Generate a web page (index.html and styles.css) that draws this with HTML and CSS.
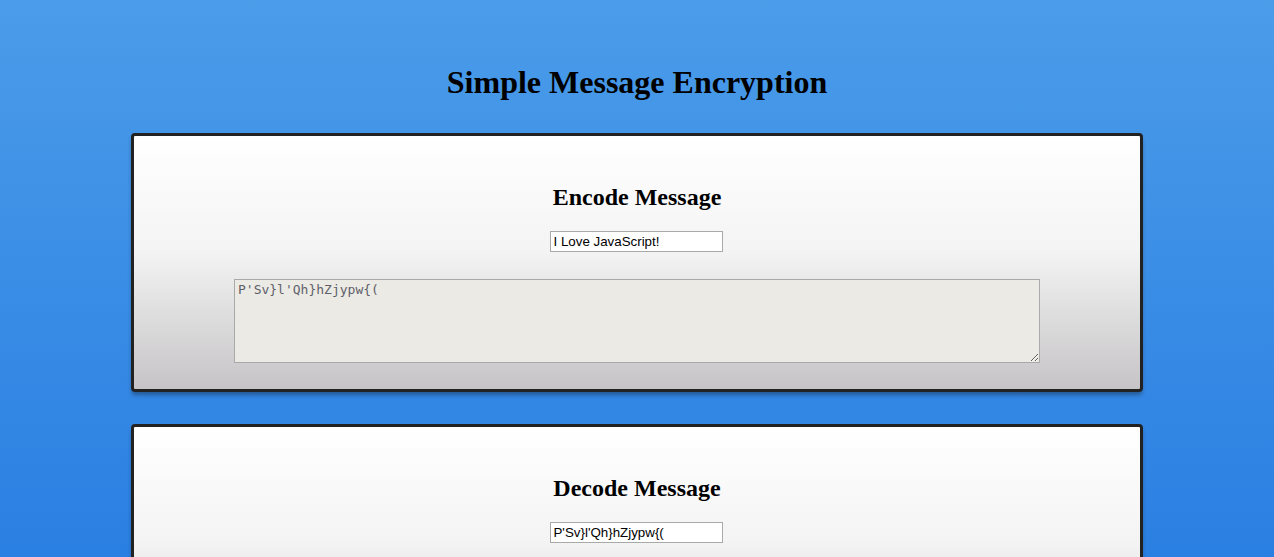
FILE: index.html
```html
<!DOCTYPE html>
<html>
<head>
<meta charset="utf-8">
<title>Simple Message Encryption</title>
<link rel="stylesheet" href="styles.css">
</head>
<body>
<div class="page">
  <h1 class="title">Simple Message Encryption</h1>
  <section class="card">
    <h2 class="card-title">Encode Message</h2>
    <input class="field" type="text" value="I Love JavaScript!">
    <textarea class="output">P'Sv}l'Qh}hZjypw{(</textarea>
  </section>
  <section class="card">
    <h2 class="card-title">Decode Message</h2>
    <input class="field" type="text" value="P'Sv}l'Qh}hZjypw{(">
    <textarea class="output">I Love JavaScript!</textarea>
  </section>
</div>
</body>
</html>
```
FILE: styles.css
```css
html {
  background: #2a7fe2;
}
body {
  margin: 0;
  min-height: 100vh;
  background: linear-gradient(to bottom, #4b9ce9 0px, #2a7fe2 557px);
  background-repeat: no-repeat;
  font-family: "Liberation Serif", "Times New Roman", serif;
}
.page {
  padding: 8px 8px 40px;
}
.title {
  margin: 56px 0 32px;
  font-size: 32px;
  line-height: 37px;
  text-align: center;
  color: #000;
}
.card {
  width: 80%;
  margin: 0 auto 32px;
  border: 3px solid #222;
  border-radius: 4px;
  background: linear-gradient(to bottom, #ffffff 0%, #f4f4f4 45%, #c6c4c6 100%);
  box-shadow: 0 4px 4px -1px rgba(20, 30, 50, 0.45);
  padding: 47px 0 26px;
  display: flex;
  flex-direction: column;
  align-items: center;
}
.card-title {
  margin: 0 0 20px;
  font-size: 24px;
  line-height: 28px;
  color: #000;
}
.field {
  box-sizing: border-box;
  width: 173px;
  height: 21px;
  margin: 0 0 27px;
  padding: 1px 2px;
  border: 1px solid #a9a9a9;
  background: #fff;
  font-family: "Liberation Sans", Arial, sans-serif;
  font-size: 13.33px;
  color: #000;
}
.output {
  box-sizing: border-box;
  width: 806px;
  height: 84px;
  margin: 0;
  padding: 2px 3px;
  border: 1px solid #a9a9a9;
  background: #ebeae4;
  font-family: "DejaVu Sans Mono", "Liberation Mono", monospace;
  font-size: 13px;
  line-height: 16px;
  color: #5f5f6a;
  resize: both;
}
```
